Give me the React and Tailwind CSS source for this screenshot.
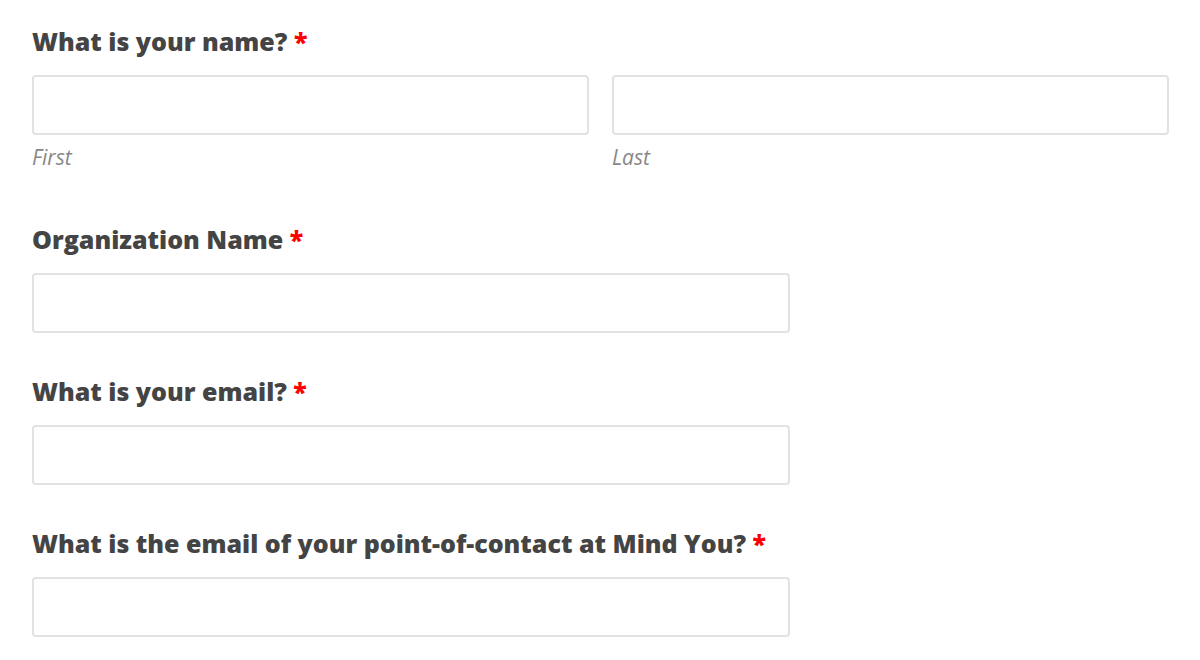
function Label({ children }) {
  return (
    <label className="block text-[25px] leading-[32px] font-extrabold text-[#444444]">
      {children} <span className="text-[#ff0000]">*</span>
    </label>
  );
}

function Input({ className = "" }) {
  return (
    <input
      type="text"
      className={`block h-[60px] rounded-[4px] border-2 border-[#e2e2e2] bg-white px-3 outline-none ${className}`}
    />
  );
}

export default function App() {
  return (
    <div className="min-h-screen bg-white pl-[32px] pr-[31px] pt-[25px] font-['Open_Sans',sans-serif]">
      <Label>What is your name?</Label>
      <div className="mt-[18px] flex gap-[23px]">
        <div className="flex-1">
          <Input className="w-full" />
          <p className="mt-[8px] text-[21px] leading-[28px] italic text-[#888888]">First</p>
        </div>
        <div className="flex-1">
          <Input className="w-full" />
          <p className="mt-[8px] text-[21px] leading-[28px] italic text-[#888888]">Last</p>
        </div>
      </div>

      <div className="mt-[52px]">
        <Label>Organization Name</Label>
        <Input className="mt-[18px] w-[758px]" />
      </div>

      <div className="mt-[42px]">
        <Label>What is your email?</Label>
        <Input className="mt-[18px] w-[758px]" />
      </div>

      <div className="mt-[42px]">
        <Label>What is the email of your point-of-contact at Mind You?</Label>
        <Input className="mt-[18px] w-[758px]" />
      </div>
    </div>
  );
}
